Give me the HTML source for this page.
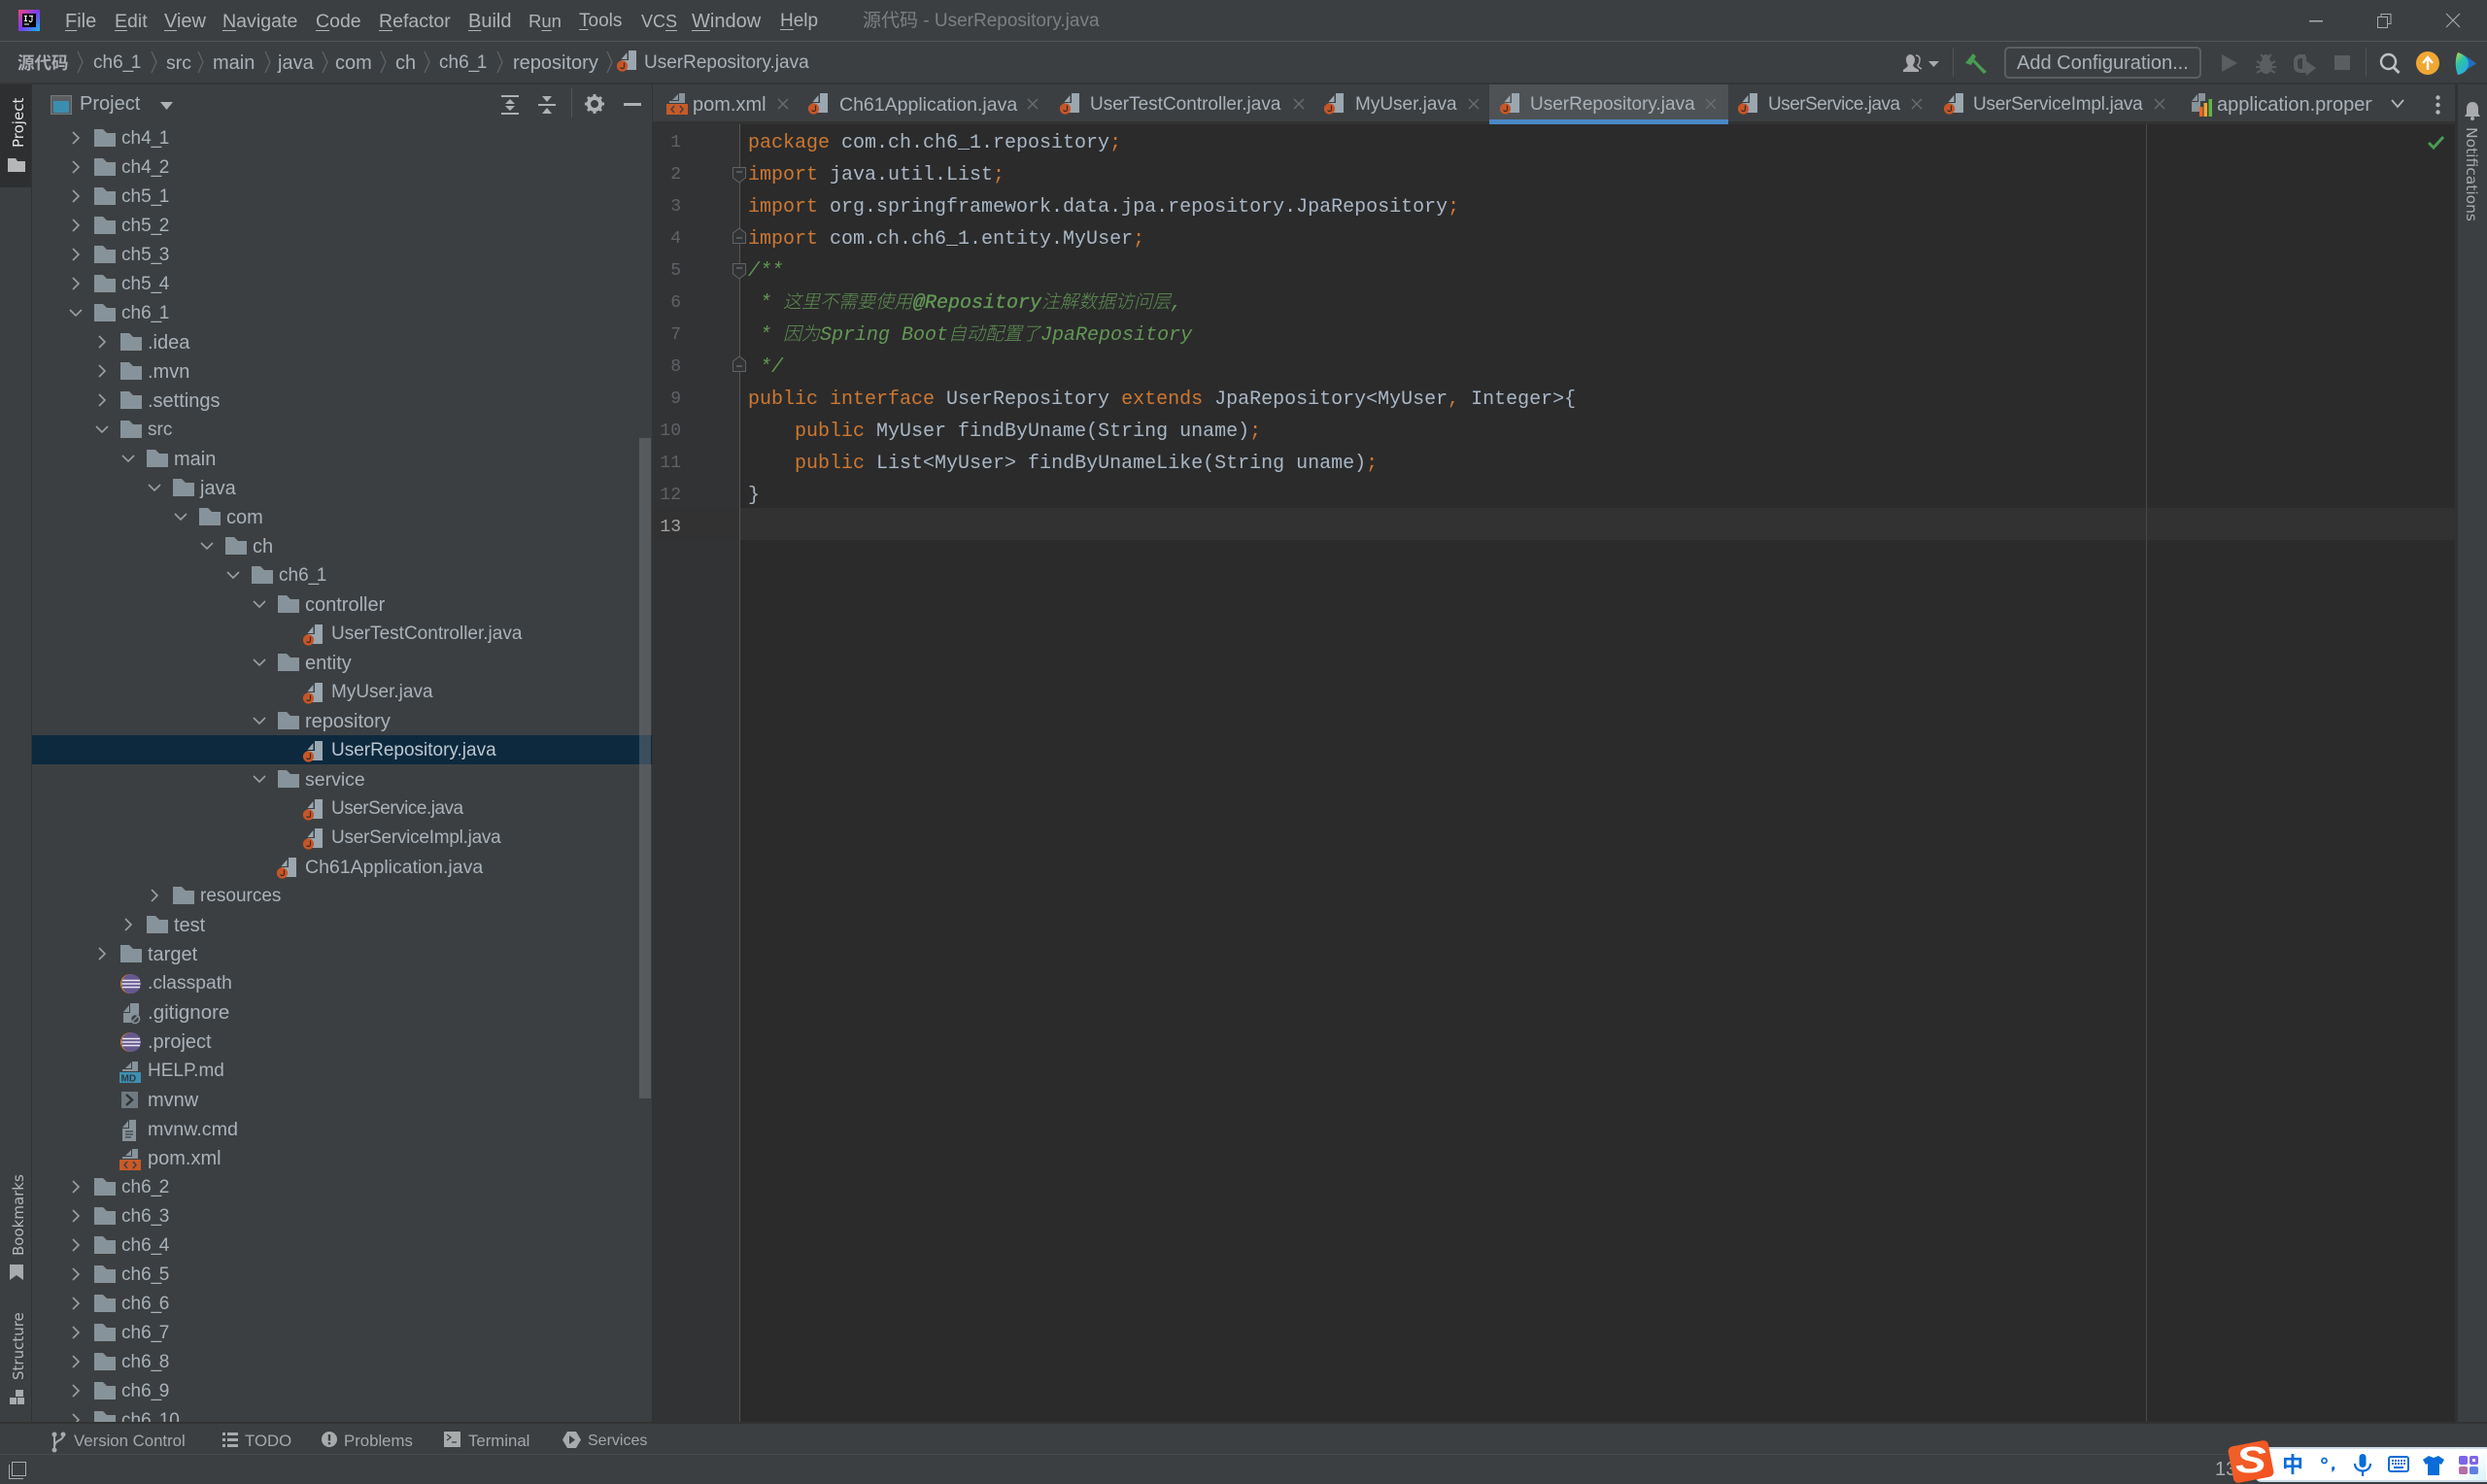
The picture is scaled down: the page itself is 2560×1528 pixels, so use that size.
<!DOCTYPE html>
<html lang="zh"><head><meta charset="utf-8"><title>UserRepository.java</title>
<style>
*{box-sizing:border-box}
html,body{margin:0;padding:0;width:2560px;height:1528px;overflow:hidden;background:#3c3f41}
body{position:relative;font-family:"Liberation Sans","Noto Sans CJK SC",sans-serif;font-size:20px;color:#afb1b3}
.a{position:absolute;white-space:pre}
.box{position:absolute}
.t{position:absolute;white-space:pre;line-height:30px;height:30px}
svg{position:absolute;overflow:visible;display:block}
u{text-decoration:underline;text-underline-offset:3px;text-decoration-thickness:1px}
i.us{font-style:normal;letter-spacing:-2.5px}
.m{top:7px;color:#b0b3b6;line-height:30px}
.bc{top:50px;color:#a9b2ba;line-height:30px}
.tab{top:93px;color:#a9b2ba;line-height:30px;font-size:19px}
#tree{position:absolute;left:33px;top:127px;width:638px;height:1337px;overflow:hidden}
.r{position:relative;height:30px;width:638px;line-height:30px}
.r .n{position:absolute;left:calc(92px + var(--l)*27px);top:1px;white-space:pre;color:#a9b2ba;font-size:19px}
.r .w{font-size:20px}
.r svg.c{left:calc(38px + var(--l)*27px);top:8px;width:14px;height:14px}
.r svg.f{left:calc(64px + var(--l)*27px);top:6px;width:22px;height:18px}
.r svg.j{left:calc(63px + var(--l)*27px);top:6px;width:22px;height:22px}
.us1{letter-spacing:-.5px}
.us2{letter-spacing:-.25px}
.code{position:absolute;left:770px;height:33px;line-height:33px;font-family:"Liberation Mono",monospace;font-size:20px;color:#a9b7c6;white-space:pre}
.k{color:#cc7832}
.cm{color:#629755;font-style:italic}
.cm b{font-weight:normal;-webkit-text-stroke:.35px #629755}
.z{display:inline-block;font-family:"Noto Sans CJK SC",sans-serif;font-size:19px;font-weight:300;font-style:italic;width:var(--w);line-height:20px;letter-spacing:0;color:#5d8d52}
.ln{position:absolute;right:1859px;height:33px;line-height:33px;font-family:"Liberation Mono",monospace;font-size:18px;color:#606366}
.rot{position:absolute;font-family:"DejaVu Sans",sans-serif;font-size:15px;white-space:pre;transform-origin:0 0;line-height:18px}
.bt{top:1469px;font-size:16.8px;color:#a4a8ac;line-height:30px}
</style></head>
<body>
<svg width="0" height="0" style="position:absolute">
<defs>
<symbol id="cr" viewBox="0 0 14 14"><path d="M4 1l6 6-6 6" fill="none" stroke="#9c9e9f" stroke-width="1.6"/></symbol>
<symbol id="cd" viewBox="0 0 14 14"><path d="M1 4l6 6 6-6" fill="none" stroke="#9c9e9f" stroke-width="1.6"/></symbol>
<symbol id="fo" viewBox="0 0 22 18"><path d="M0 0h9l4 4h9v14H0z" fill="#87939a"/></symbol>
<symbol id="jv" viewBox="0 0 22 22"><path d="M4.500 9l6-7v7z" fill="#9aa7b0"/><path d="M12 0h8v20H4.500V10H12z" fill="#9aa7b0"/><circle cx="5.500" cy="16" r="5.600" fill="#c75527"/><path d="M7.500 12.500v4.300a2 2 0 0 1-3.800.6" fill="none" stroke="#3a2a22" stroke-width="1.2"/></symbol>
<symbol id="ec" viewBox="0 0 22 22"><circle cx="11" cy="10" r="10" fill="#e08a1e"/><circle cx="12" cy="10" r="10" fill="#65588f"/><path d="M3 6.500h18M2.500 10h19M3 13.500h18" stroke="#e8e6ef" stroke-width="1.6"/></symbol>
<symbol id="x" viewBox="0 0 12 12"><path d="M1 1l10 10M11 1L1 11" stroke="#6b6d6f" stroke-width="1.3"/></symbol>
</defs>
</svg>

<!-- title bar -->
<div class="box" style="left:0;top:42px;width:2560px;height:1px;background:#555759"></div>
<svg style="left:19px;top:10px" width="22" height="22" viewBox="0 0 22 22"><defs><linearGradient id="lg" x1="0" y1="0" x2="1" y2="1"><stop offset="0" stop-color="#f0477b"/><stop offset=".5" stop-color="#7a3cf0"/><stop offset="1" stop-color="#16b8f3"/></linearGradient></defs><rect width="22" height="22" fill="url(#lg)"/><rect x="4" y="4" width="14" height="14" fill="#000"/><path d="M6 6.500h3M7.500 6.500v5M6 11.500h3M11 6.500h4M14 6.500v4.500a1.500 1.500 0 0 1-3 0M6 15h5" stroke="#fff" stroke-width="1" fill="none"/></svg>
<span class="a m" style="left:67px"><u>F</u>ile</span>
<span class="a m" style="left:118px;font-size:19.5px"><u>E</u>dit</span>
<span class="a m" style="left:169px"><u>V</u>iew</span>
<span class="a m" style="left:229px;font-size:19.6px"><u>N</u>avigate</span>
<span class="a m" style="left:325px;font-size:19.5px"><u>C</u>ode</span>
<span class="a m" style="left:390px;font-size:19.5px"><u>R</u>efactor</span>
<span class="a m" style="left:482px"><u>B</u>uild</span>
<span class="a m" style="left:544px;font-size:18.5px">R<u>u</u>n</span>
<span class="a m" style="left:596px;font-size:19px"><u>T</u>ools</span>
<span class="a m" style="left:660px;font-size:18px">VC<u>S</u></span>
<span class="a m" style="left:712px"><u>W</u>indow</span>
<span class="a m" style="left:803px;font-size:19px"><u>H</u>elp</span>
<span class="a m" style="left:888px;color:#7d7f81;font-size:19px">源代码 - UserRepository.java</span>
<svg style="left:2377px;top:21px" width="14" height="2"><rect width="14" height="1.5" fill="#a8aaac"/></svg>
<svg style="left:2447px;top:14px" width="15" height="15"><path d="M.5 3.500h10v11H.5zM4 3.500V.5h10v10h-3.500" fill="none" stroke="#a8aaac"/></svg>
<svg style="left:2518px;top:14px" width="14" height="14"><path d="M0 0l14 14M14 0L0 14" stroke="#a8aaac" stroke-width="1.1"/></svg>

<!-- breadcrumb -->
<span class="a bc" style="left:18px;font-weight:bold;font-size:17.5px;color:#a8acb0">源代码</span>
<span class="a bc" style="left:96px;font-size:19px">ch6<i class="us">_</i>1</span>
<span class="a bc" style="left:171px;font-size:19.5px">src</span>
<span class="a bc" style="left:219px">main</span>
<span class="a bc" style="left:286px">java</span>
<span class="a bc" style="left:345px">com</span>
<span class="a bc" style="left:407px">ch</span>
<span class="a bc" style="left:452px;font-size:19px">ch6<i class="us">_</i>1</span>
<span class="a bc" style="left:528px">repository</span>
<span class="a bc" style="left:663px;font-size:19px">UserRepository.java</span>
<svg style="left:0;top:0" width="640" height="85"><g fill="none" stroke="#606365" stroke-width="1.3"><path d="M80 53l5 11-5 11M156 53l5 11-5 11M204 53l5 11-5 11M273 53l5 11-5 11M332 53l5 11-5 11M392 53l5 11-5 11M437 53l5 11-5 11M512 53l5 11-5 11M625 53l5 11-5 11"/></g></svg>
<svg style="left:635px;top:52px" width="22" height="22"><use href="#jv"/></svg>

<!-- toolbar -->
<svg style="left:1959px;top:55px" width="40" height="20" viewBox="0 0 40 20"><path d="M7 1a5 5 0 0 1 5 5c0 3-1 5-2 6l1 2 5 3v2H0v-2l4-3 1-2c-1-1-2-3-2-6a5 5 0 0 1 4-5z" fill="#a8aaac"/><path d="M13 2a4 4 0 0 1 4 5c0 2-1 4-2 5l1 2 3 2" fill="none" stroke="#a8aaac" stroke-width="1.4"/><path d="M26 8h11l-5.500 6z" fill="#a8aaac"/></svg>
<div class="box" style="left:2010px;top:49px;width:1px;height:30px;background:#515355"></div>
<svg style="left:2022px;top:54px" width="24" height="22" viewBox="0 0 24 22"><path d="M1 11L9 1l3 3-5 9z" fill="#499c54"/><path d="M9 6l14 14-3 2L7 8z" fill="#499c54"/></svg>
<div class="box" style="left:2063px;top:48px;width:203px;height:33px;border:2px solid #5c5f61;border-radius:5px"></div>
<span class="a" style="left:2076px;top:50px;line-height:30px;color:#a9b2ba">Add Configuration...</span>
<svg style="left:2287px;top:56px" width="16" height="18"><path d="M0 0l16 9-16 9z" fill="#5b5e60"/></svg>
<svg style="left:2322px;top:55px" width="21" height="22" viewBox="0 0 21 22"><ellipse cx="10.500" cy="13" rx="6.500" ry="8" fill="#5b5e60"/><circle cx="10.500" cy="5" r="4" fill="#5b5e60"/><path d="M1 8l5 3M20 8l-5 3M0 14h5M21 14h-5M1 20l5-3M20 20l-5-3M5 1l3 3M16 1l-3 3" stroke="#5b5e60" stroke-width="2"/></svg>
<svg style="left:2360px;top:55px" width="24" height="24" viewBox="0 0 24 24"><path d="M13 3H8a5 5 0 0 0-5 5v5a5 5 0 0 0 5 5h4V3z" fill="none" stroke="#5b5e60" stroke-width="4"/><path d="M14 8l10 7-10 8z" fill="#5b5e60"/></svg>
<svg style="left:2403px;top:57px" width="16" height="15"><rect width="16" height="15" fill="#5b5e60"/></svg>
<div class="box" style="left:2435px;top:49px;width:1px;height:30px;background:#515355"></div>
<svg style="left:2449px;top:54px" width="22" height="22" viewBox="0 0 22 22"><circle cx="9.500" cy="9.500" r="7.500" fill="none" stroke="#bfc1c3" stroke-width="2.400"/><path d="M14.500 15l6 6" stroke="#bfc1c3" stroke-width="3"/></svg>
<svg style="left:2487px;top:53px" width="24" height="24" viewBox="0 0 24 24"><circle cx="12" cy="12" r="12" fill="#f0a732"/><path d="M12 19V7M7 12l5-6 5 6" fill="none" stroke="#fff" stroke-width="2.400"/></svg>
<svg style="left:2527px;top:54px" width="22" height="23" viewBox="0 0 22 23"><defs><linearGradient id="tb" x1="0" y1="0" x2=".6" y2="1"><stop offset="0" stop-color="#c9dc3e"/><stop offset=".45" stop-color="#2fc4a6"/><stop offset="1" stop-color="#29a9e0"/></linearGradient></defs><path d="M3 0c-3 6-3 16 0 23l19-11.500C15 6 9 2 3 0z" fill="#1f6fc4"/><path d="M3 0c-3 6-3 16 0 23 7-1 11-6 11-11.500S9 2 3 0z" fill="url(#tb)"/></svg>

<!-- separators -->
<div class="box" style="left:0;top:85px;width:2560px;height:2px;background:#333537"></div>

<!-- left stripe -->
<div class="box" style="left:32px;top:87px;width:1px;height:1377px;background:#323232"></div>
<div class="box" style="left:0;top:87px;width:32px;height:106px;background:#2d2f30"></div>
<span class="rot" style="left:10px;top:152px;transform:rotate(-90deg);color:#e4e4e4">Project</span>
<svg style="left:8px;top:163px" width="18" height="14" viewBox="0 0 18 14"><path d="M0 0h8l2 3h8v11H0z" fill="#b4b6b8"/></svg>
<span class="rot" style="left:10px;top:1293px;transform:rotate(-90deg);color:#b4b6b8">Bookmarks</span>
<svg style="left:10px;top:1302px" width="14" height="16"><path d="M0 0h14v16l-7-5-7 5z" fill="#a8aaac"/></svg>
<span class="rot" style="left:10px;top:1421px;transform:rotate(-90deg);color:#b4b6b8">Structure</span>
<svg style="left:10px;top:1431px" width="15" height="15"><path d="M6 0h8v7H6zM0 8h7v7H0zM8 8h7v7H8z" fill="#a8aaac"/></svg>

<!-- project header -->
<svg style="left:52px;top:98px" width="22" height="20" viewBox="0 0 22 20"><rect x=".5" y=".5" width="21" height="19" fill="#5a5e61" stroke="#73797d"/><rect x="3" y="6" width="16" height="12" fill="#3b8eb0"/></svg>
<span class="a" style="left:82px;top:92px;line-height:30px;color:#a9b3bb">Project</span>
<svg style="left:165px;top:105px" width="13" height="8"><path d="M0 0h13L6.500 8z" fill="#aeb0b2"/></svg>
<svg style="left:516px;top:98px" width="18" height="20" viewBox="0 0 18 20" fill="#aeb0b2"><rect width="18" height="2"/><rect y="18" width="18" height="2"/><path d="M9 4l5 5H4zM9 16l-5-5h10z"/></svg>
<svg style="left:554px;top:98px" width="18" height="20" viewBox="0 0 18 20" fill="#aeb0b2"><rect y="9" width="18" height="2"/><path d="M4 1h10L9 7zM4 19h10l-5-6z"/></svg>
<div class="box" style="left:588px;top:91px;width:1px;height:30px;background:#515355"></div>
<svg style="left:602px;top:97px" width="20" height="20" viewBox="0 0 20 20"><circle cx="10" cy="10" r="6" fill="none" stroke="#aeb0b2" stroke-width="4"/><path d="M10 0v4M10 16v4M0 10h4M16 10h4M3 3l3 3M14 14l3 3M17 3l-3 3M3 17l3-3" stroke="#aeb0b2" stroke-width="3"/></svg>
<div class="box" style="left:642px;top:106px;width:18px;height:3px;background:#aeb0b2"></div>

<!-- tree -->
<div id="tree">
<div class="r" style="--l:0"><svg class="c"><use href="#cr"/></svg><svg class="f"><use href="#fo"/></svg><span class="n">ch4<i class="us">_</i>1</span></div>
<div class="r" style="--l:0"><svg class="c"><use href="#cr"/></svg><svg class="f"><use href="#fo"/></svg><span class="n">ch4<i class="us">_</i>2</span></div>
<div class="r" style="--l:0"><svg class="c"><use href="#cr"/></svg><svg class="f"><use href="#fo"/></svg><span class="n">ch5<i class="us">_</i>1</span></div>
<div class="r" style="--l:0"><svg class="c"><use href="#cr"/></svg><svg class="f"><use href="#fo"/></svg><span class="n">ch5<i class="us">_</i>2</span></div>
<div class="r" style="--l:0"><svg class="c"><use href="#cr"/></svg><svg class="f"><use href="#fo"/></svg><span class="n">ch5<i class="us">_</i>3</span></div>
<div class="r" style="--l:0"><svg class="c"><use href="#cr"/></svg><svg class="f"><use href="#fo"/></svg><span class="n">ch5<i class="us">_</i>4</span></div>
<div class="r" style="--l:0"><svg class="c"><use href="#cd"/></svg><svg class="f"><use href="#fo"/></svg><span class="n">ch6<i class="us">_</i>1</span></div>
<div class="r" style="--l:1"><svg class="c"><use href="#cr"/></svg><svg class="f"><use href="#fo"/></svg><span class="n w">.idea</span></div>
<div class="r" style="--l:1"><svg class="c"><use href="#cr"/></svg><svg class="f"><use href="#fo"/></svg><span class="n w">.mvn</span></div>
<div class="r" style="--l:1"><svg class="c"><use href="#cr"/></svg><svg class="f"><use href="#fo"/></svg><span class="n w">.settings</span></div>
<div class="r" style="--l:1"><svg class="c"><use href="#cd"/></svg><svg class="f"><use href="#fo"/></svg><span class="n">src</span></div>
<div class="r" style="--l:2"><svg class="c"><use href="#cd"/></svg><svg class="f"><use href="#fo"/></svg><span class="n w">main</span></div>
<div class="r" style="--l:3"><svg class="c"><use href="#cd"/></svg><svg class="f"><use href="#fo"/></svg><span class="n w">java</span></div>
<div class="r" style="--l:4"><svg class="c"><use href="#cd"/></svg><svg class="f"><use href="#fo"/></svg><span class="n w">com</span></div>
<div class="r" style="--l:5"><svg class="c"><use href="#cd"/></svg><svg class="f"><use href="#fo"/></svg><span class="n w">ch</span></div>
<div class="r" style="--l:6"><svg class="c"><use href="#cd"/></svg><svg class="f"><use href="#fo"/></svg><span class="n">ch6<i class="us">_</i>1</span></div>
<div class="r" style="--l:7"><svg class="c"><use href="#cd"/></svg><svg class="f"><use href="#fo"/></svg><span class="n w">controller</span></div>
<div class="r" style="--l:8"><svg class="j"><use href="#jv"/></svg><span class="n">UserTestController.java</span></div>
<div class="r" style="--l:7"><svg class="c"><use href="#cd"/></svg><svg class="f"><use href="#fo"/></svg><span class="n w">entity</span></div>
<div class="r" style="--l:8"><svg class="j"><use href="#jv"/></svg><span class="n">MyUser.java</span></div>
<div class="r" style="--l:7"><svg class="c"><use href="#cd"/></svg><svg class="f"><use href="#fo"/></svg><span class="n w">repository</span></div>
<div class="r" style="--l:8;background:#0d293e"><svg class="j"><use href="#jv"/></svg><span class="n" style="color:#bcc6d0">UserRepository.java</span></div>
<div class="r" style="--l:7"><svg class="c"><use href="#cd"/></svg><svg class="f"><use href="#fo"/></svg><span class="n" style="font-size:19.5px">service</span></div>
<div class="r" style="--l:8"><svg class="j"><use href="#jv"/></svg><span class="n us1">UserService.java</span></div>
<div class="r" style="--l:8"><svg class="j"><use href="#jv"/></svg><span class="n us2">UserServiceImpl.java</span></div>
<div class="r" style="--l:7"><svg class="j"><use href="#jv"/></svg><span class="n" style="font-size:19.5px">Ch61Application.java</span></div>
<div class="r" style="--l:3"><svg class="c"><use href="#cr"/></svg><svg class="f"><use href="#fo"/></svg><span class="n">resources</span></div>
<div class="r" style="--l:2"><svg class="c"><use href="#cr"/></svg><svg class="f"><use href="#fo"/></svg><span class="n w">test</span></div>
<div class="r" style="--l:1"><svg class="c"><use href="#cr"/></svg><svg class="f"><use href="#fo"/></svg><span class="n w">target</span></div>
<div class="r" style="--l:1"><svg class="j"><use href="#ec"/></svg><span class="n" style="font-size:19.3px">.classpath</span></div>
<div class="r" style="--l:1"><svg class="j" viewBox="0 0 22 22"><path d="M4 9l6-7v7z" fill="#87939a"/><path d="M11 0h9v12a6 6 0 0 0-8 8H4V10h7z" fill="#87939a"/><circle cx="16" cy="16" r="4.500" fill="none" stroke="#87939a" stroke-width="1.600"/><path d="M13 19l6-6" stroke="#87939a" stroke-width="1.500"/></svg><span class="n" style="font-size:20.500px">.gitignore</span></div>
<div class="r" style="--l:1"><svg class="j"><use href="#ec"/></svg><span class="n w">.project</span></div>
<div class="r" style="--l:1"><svg class="j" viewBox="0 0 22 22"><path d="M6 7l6-6v6z" fill="#87939a"/><path d="M13 0h6v10H3V8h10z" fill="#87939a"/><rect y="11" width="22" height="11" fill="#3e8fb0"/><text x="1.500" y="20.500" font-size="10" font-family="Liberation Sans,sans-serif" font-weight="bold" fill="#2b3b44">MD</text></svg><span class="n">HELP.md</span></div>
<div class="r" style="--l:1"><svg class="j" viewBox="0 0 22 22"><rect x="2" y="1" width="17" height="17" fill="#6f7a80"/><path d="M7 4l6 5.500-6 5.500" fill="none" stroke="#2f3133" stroke-width="2.500"/></svg><span class="n w">mvnw</span></div>
<div class="r" style="--l:1"><svg class="j" viewBox="0 0 22 22"><path d="M3 8l6-7v7z" fill="#87939a"/><path d="M10 0h7v22H3V9h7z" fill="#87939a"/><path d="M6 12h8M6 15h8M6 18h6" stroke="#3c3f41" stroke-width="1.200"/></svg><span class="n" style="font-size:19.7px">mvnw.cmd</span></div>
<div class="r" style="--l:1"><svg class="j" viewBox="0 0 22 22"><path d="M6 7l6-6v6z" fill="#87939a"/><path d="M13 0h6v10H3V8h10z" fill="#87939a"/><rect y="11" width="22" height="11" fill="#c75a27"/><path d="M8 13l-3 3.500 3 3.500M14 13l3 3.500-3 3.500" fill="none" stroke="#3c3f41" stroke-width="1.400"/></svg><span class="n w">pom.xml</span></div>
<div class="r" style="--l:0"><svg class="c"><use href="#cr"/></svg><svg class="f"><use href="#fo"/></svg><span class="n">ch6<i class="us">_</i>2</span></div>
<div class="r" style="--l:0"><svg class="c"><use href="#cr"/></svg><svg class="f"><use href="#fo"/></svg><span class="n">ch6<i class="us">_</i>3</span></div>
<div class="r" style="--l:0"><svg class="c"><use href="#cr"/></svg><svg class="f"><use href="#fo"/></svg><span class="n">ch6<i class="us">_</i>4</span></div>
<div class="r" style="--l:0"><svg class="c"><use href="#cr"/></svg><svg class="f"><use href="#fo"/></svg><span class="n">ch6<i class="us">_</i>5</span></div>
<div class="r" style="--l:0"><svg class="c"><use href="#cr"/></svg><svg class="f"><use href="#fo"/></svg><span class="n">ch6<i class="us">_</i>6</span></div>
<div class="r" style="--l:0"><svg class="c"><use href="#cr"/></svg><svg class="f"><use href="#fo"/></svg><span class="n">ch6<i class="us">_</i>7</span></div>
<div class="r" style="--l:0"><svg class="c"><use href="#cr"/></svg><svg class="f"><use href="#fo"/></svg><span class="n">ch6<i class="us">_</i>8</span></div>
<div class="r" style="--l:0"><svg class="c"><use href="#cr"/></svg><svg class="f"><use href="#fo"/></svg><span class="n">ch6<i class="us">_</i>9</span></div>
<div class="r" style="--l:0"><svg class="c"><use href="#cr"/></svg><svg class="f"><use href="#fo"/></svg><span class="n">ch6<i class="us">_</i>10</span></div>
<div class="box" style="left:625px;top:324px;width:12px;height:680px;background:rgba(126,128,130,.42)"></div>
</div>
<div class="box" style="left:671px;top:87px;width:1px;height:1377px;background:#323232"></div>

<!-- tab bar -->
<div class="box" style="left:1533px;top:87px;width:246px;height:36px;background:#4e5254"></div>
<div class="box" style="left:672px;top:125px;width:1855px;height:3px;background:#323232"></div>
<div class="box" style="left:1533px;top:123px;width:246px;height:5px;background:#4a88c7"></div>
<svg style="left:686px;top:96px" width="22" height="22" viewBox="0 0 22 22"><path d="M6 7l6-6v6z" fill="#87939a"/><path d="M13 0h6v10H3V8h10z" fill="#87939a"/><rect y="11" width="22" height="11" fill="#c75a27"/><path d="M8 13l-3 3.500 3 3.500M14 13l3 3.500-3 3.500" fill="none" stroke="#3c3f41" stroke-width="1.400"/></svg>
<span class="a tab" style="left:713px;font-size:20px">pom.xml</span><svg style="left:800px;top:101px" width="12" height="12"><use href="#x"/></svg>
<svg style="left:832px;top:96px" width="22" height="22"><use href="#jv"/></svg>
<span class="a tab" style="left:864px;font-size:19.5px">Ch61Application.java</span><svg style="left:1057px;top:101px" width="12" height="12"><use href="#x"/></svg>
<svg style="left:1091px;top:96px" width="22" height="22"><use href="#jv"/></svg>
<span class="a tab" style="left:1122px">UserTestController.java</span><svg style="left:1331px;top:101px" width="12" height="12"><use href="#x"/></svg>
<svg style="left:1363px;top:96px" width="22" height="22"><use href="#jv"/></svg>
<span class="a tab" style="left:1395px">MyUser.java</span><svg style="left:1511px;top:101px" width="12" height="12"><use href="#x"/></svg>
<svg style="left:1544px;top:96px" width="22" height="22"><use href="#jv"/></svg>
<span class="a tab" style="left:1575px">UserRepository.java</span><svg style="left:1755px;top:101px" width="12" height="12"><use href="#x"/></svg>
<svg style="left:1789px;top:96px" width="22" height="22"><use href="#jv"/></svg>
<span class="a tab us1" style="left:1820px">UserService.java</span><svg style="left:1967px;top:101px" width="12" height="12"><use href="#x"/></svg>
<svg style="left:2001px;top:96px" width="22" height="22"><use href="#jv"/></svg>
<span class="a tab us2" style="left:2031px">UserServiceImpl.java</span><svg style="left:2217px;top:101px" width="12" height="12"><use href="#x"/></svg>
<svg style="left:2256px;top:96px" width="22" height="24" viewBox="0 0 22 24"><path d="M0 8l6-7v7z" fill="#87939a"/><path d="M7 0h7v8H9v11H0V9h7z" fill="#87939a"/><rect x="8" y="14" width="3.500" height="10" fill="#f26522"/><rect x="12.500" y="10" width="3.500" height="14" fill="#f0a732"/><rect x="17.500" y="6" width="3.500" height="18" fill="#62b543"/></svg>
<div class="a tab" style="left:2282px;width:160px;overflow:hidden;font-size:20px">application.properties</div>
<svg style="left:2461px;top:102px" width="14" height="10"><path d="M1 1l6 7 6-7" fill="none" stroke="#b4b6b8" stroke-width="1.800"/></svg>
<svg style="left:2507px;top:98px" width="5" height="20"><circle cx="2.500" cy="2.500" r="2.200" fill="#b4b6b8"/><circle cx="2.500" cy="10" r="2.200" fill="#b4b6b8"/><circle cx="2.500" cy="17.500" r="2.200" fill="#b4b6b8"/></svg>

<!-- editor -->
<div class="box" style="left:672px;top:128px;width:89px;height:1336px;background:#313335"></div>
<div class="box" style="left:761px;top:128px;width:1766px;height:1336px;background:#2b2b2b"></div>
<div class="box" style="left:672px;top:523px;width:1855px;height:33px;background:#323232"></div>
<div class="box" style="left:761px;top:128px;width:1px;height:1336px;background:#555"></div>
<div class="box" style="left:2209px;top:128px;width:1px;height:1336px;background:#4a4a4a"></div>
<svg style="left:2499px;top:140px" width="18" height="14"><path d="M1 7l5 5L16 1" fill="none" stroke="#499c54" stroke-width="3"/></svg>

<svg style="left:754px;top:171px" width="14" height="18" viewBox="0 0 14 18"><path d="M.5 1.500h13V12L7 17 .5 12z" fill="#313335" stroke="#606366"/><path d="M4 6h6" stroke="#808284"/></svg>
<svg style="left:754px;top:234px" width="14" height="18" viewBox="0 0 14 18"><path d="M.5 16.500h13V6L7 1 .5 6z" fill="#313335" stroke="#606366"/><path d="M4 11h6" stroke="#808284"/></svg>
<svg style="left:754px;top:270px" width="14" height="18" viewBox="0 0 14 18"><path d="M.5 1.500h13V12L7 17 .5 12z" fill="#313335" stroke="#606366"/><path d="M4 6h6" stroke="#808284"/></svg>
<svg style="left:754px;top:366px" width="14" height="18" viewBox="0 0 14 18"><path d="M.5 16.500h13V6L7 1 .5 6z" fill="#313335" stroke="#606366"/><path d="M4 11h6" stroke="#808284"/></svg>

<span class="ln" style="top:131px">1</span>
<span class="ln" style="top:164px">2</span>
<span class="ln" style="top:197px">3</span>
<span class="ln" style="top:230px">4</span>
<span class="ln" style="top:263px">5</span>
<span class="ln" style="top:296px">6</span>
<span class="ln" style="top:329px">7</span>
<span class="ln" style="top:362px">8</span>
<span class="ln" style="top:395px">9</span>
<span class="ln" style="top:428px">10</span>
<span class="ln" style="top:461px">11</span>
<span class="ln" style="top:494px">12</span>
<span class="ln" style="top:527px;color:#a4a3a3">13</span>

<div class="code" style="top:131px"><span class="k">package</span> com.ch.ch6_1.repository<span class="k">;</span></div>
<div class="code" style="top:164px"><span class="k">import</span> java.util.List<span class="k">;</span></div>
<div class="code" style="top:197px"><span class="k">import</span> org.springframework.data.jpa.repository.JpaRepository<span class="k">;</span></div>
<div class="code" style="top:230px"><span class="k">import</span> com.ch.ch6_1.entity.MyUser<span class="k">;</span></div>
<div class="code cm" style="top:263px">/**</div>
<div class="code cm" style="top:296px"> * <span class="z" style="--w:134px">这里不需要使用</span><b>@Repository</b><span class="z" style="--w:133px">注解数据访问层</span>,</div>
<div class="code cm" style="top:329px"> * <span class="z" style="--w:38px">因为</span>Spring Boot<span class="z" style="--w:95px">自动配置了</span>JpaRepository</div>
<div class="code cm" style="top:362px"> */</div>
<div class="code" style="top:395px"><span class="k">public interface</span> UserRepository <span class="k">extends</span> JpaRepository&lt;MyUser<span class="k">,</span> Integer&gt;{</div>
<div class="code" style="top:428px">    <span class="k">public</span> MyUser findByUname(String uname)<span class="k">;</span></div>
<div class="code" style="top:461px">    <span class="k">public</span> List&lt;MyUser&gt; findByUnameLike(String uname)<span class="k">;</span></div>
<div class="code" style="top:494px">}</div>

<!-- right stripe -->
<div class="box" style="left:2527px;top:87px;width:3px;height:1377px;background:#323232"></div>
<svg style="left:2536px;top:105px" width="18" height="19" viewBox="0 0 18 19"><path d="M9 0c4 0 6 3 6 7v5l2 3H1l2-3V7c0-4 2-7 6-7z" fill="#a8aaac"/><circle cx="9" cy="17" r="2" fill="#a8aaac"/></svg>
<span class="rot" style="left:2553px;top:131px;transform:rotate(90deg);color:#a8aaac;font-size:15.5px">Notifications</span>

<!-- bottom -->
<div class="box" style="left:0;top:1464px;width:2560px;height:2px;background:#323232"></div>
<div class="box" style="left:0;top:1497px;width:2560px;height:1px;background:#494b4d"></div>
<svg style="left:52px;top:1474px" width="16" height="22" viewBox="0 0 16 22"><circle cx="4" cy="3" r="2.500" fill="#a8aaac"/><circle cx="13" cy="3" r="2.500" fill="#a8aaac"/><circle cx="4" cy="19" r="2.500" fill="#a8aaac"/><path d="M4 3v16M13 4c0 6-9 4-9 12" fill="none" stroke="#a8aaac" stroke-width="2"/></svg>
<span class="a bt" style="left:76px">Version Control</span>
<svg style="left:229px;top:1475px" width="16" height="15" fill="#a8aaac"><rect width="3" height="3"/><rect x="5" width="11" height="3"/><rect y="6" width="3" height="3"/><rect x="5" y="6" width="11" height="3"/><rect y="12" width="3" height="3"/><rect x="5" y="12" width="11" height="3"/></svg>
<span class="a bt" style="left:252px">TODO</span>
<svg style="left:331px;top:1474px" width="16" height="16"><circle cx="8" cy="8" r="8" fill="#a8aaac"/><rect x="6.800" y="3" width="2.400" height="6.500" fill="#3c3f41"/><rect x="6.800" y="11" width="2.400" height="2.400" fill="#3c3f41"/></svg>
<span class="a bt" style="left:354px">Problems</span>
<svg style="left:457px;top:1474px" width="17" height="16"><rect width="17" height="16" fill="#a8aaac"/><path d="M3 3l4 3-4 3M8 11h5" fill="none" stroke="#3c3f41" stroke-width="1.300"/></svg>
<span class="a bt" style="left:482px">Terminal</span>
<svg style="left:579px;top:1474px" width="19" height="17"><path d="M5 0h9l5 8.500-5 8.500H5L0 8.500z" fill="#a8aaac"/><path d="M7 4l6 4.500-6 4.500z" fill="#3c3f41"/></svg>
<span class="a bt" style="left:605px;font-size:16px">Services</span>

<svg style="left:9px;top:1505px" width="18" height="18"><path d="M3.500 .5h14v14h-14zM.5 3v14.500H15" fill="none" stroke="#a8aaac"/></svg>
<span class="a" style="left:2280px;top:1498px;line-height:30px;color:#a8aaac">13</span>

<!-- IME -->
<div class="box" style="left:2322px;top:1490px;width:238px;height:36px;background:#fff;border:2px solid #cfdcea;border-right:none;border-radius:5px 0 0 5px"></div>
<div class="box" style="left:2296px;top:1486px;width:42px;height:38px;background:linear-gradient(135deg,#f0622a,#f4511e);border-radius:5px;transform:rotate(-11deg)"></div>
<span class="a" style="left:2297px;top:1483px;width:40px;height:42px;line-height:42px;text-align:center;font:italic bold 38px/42px 'Liberation Sans',sans-serif;color:#fff;transform:scaleX(1.25)">S</span>
<span class="a" style="left:2349px;top:1494px;line-height:30px;font-weight:bold;font-size:22px;color:#0a6cd8">中</span>
<svg style="left:2389px;top:1500px" width="17" height="17"><circle cx="3.500" cy="4" r="2.500" fill="none" stroke="#0a6cd8" stroke-width="1.800"/><path d="M13 10c2 0 2 4-2 6 1-2 0-3 0-4s1-2 2-2z" fill="#0a6cd8"/></svg>
<svg style="left:2423px;top:1497px" width="18" height="23" fill="none" stroke="#0a6cd8" stroke-width="2.200"><rect x="5.500" y="0" width="7" height="14" rx="3.500" fill="#0a6cd8" stroke="none"/><path d="M1 10c0 10 16 10 16 0M9 17v6"/></svg>
<svg style="left:2458px;top:1499px" width="22" height="17"><rect x="1" y="1" width="20" height="15" rx="2" fill="none" stroke="#0a6cd8" stroke-width="2"/><path d="M4 5h14M4 8h14" stroke="#0a6cd8" stroke-width="2" stroke-dasharray="2 1"/><path d="M6 12h10" stroke="#0a6cd8" stroke-width="2"/></svg>
<svg style="left:2494px;top:1499px" width="22" height="20"><path d="M6 0l5 2 5-2 6 4-3 5-2-1v12H5V8L3 9 0 4z" fill="#0a6cd8"/></svg>
<div class="box" style="left:2522px;top:1496px;width:37px;height:28px;background:linear-gradient(135deg,#fff 45%,#d8f4f8 100%)"></div>
<svg style="left:2531px;top:1499px" width="20" height="19"><rect width="9" height="9" rx="2" fill="#7d66e8"/><rect x="11" width="9" height="9" rx="2" fill="#7d66e8"/><rect x="14" y="3" width="3" height="3" fill="#fff"/><rect y="11" width="9" height="8" rx="2" fill="#b56ea8"/><rect x="11" y="11" width="9" height="8" rx="2" fill="#5f7fe8"/></svg>
</body></html>
